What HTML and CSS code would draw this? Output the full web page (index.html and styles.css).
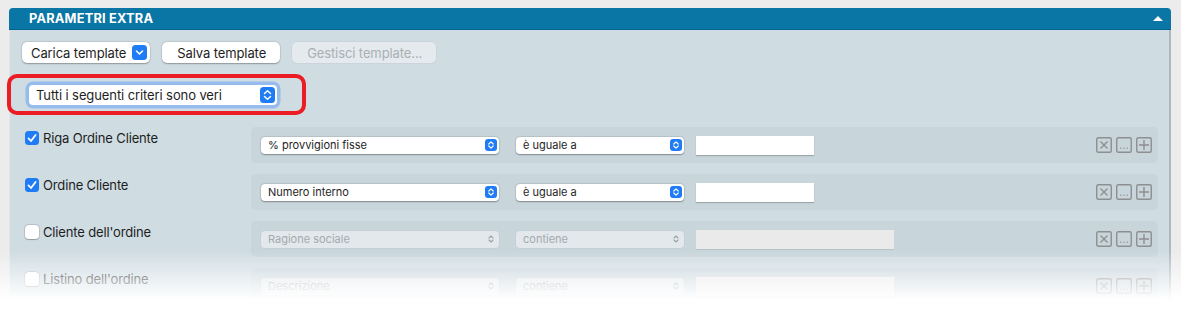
FILE: index.html
```html
<!DOCTYPE html>
<html lang="it">
<head>
  <meta charset="UTF-8">
  <meta name="viewport" content="width=device-width, initial-scale=1.0">
  <title>Parametri extra</title>
  <link rel="stylesheet" href="styles.css">
</head>
<body>

<div class="panel">
  <div class="panel-head">
    <span class="panel-title">PARAMETRI EXTRA</span>
    <span class="collapse"></span>
  </div>

  <div class="panel-body">
    <div class="toolbar">
      <button class="btn btn-popup">Carica template
        <svg class="chev" width="15" height="15" viewBox="0 0 15 15"><rect width="15" height="15" rx="3.5" fill="#1f7cf5"/><path d="M4.5 6 L7.5 9 L10.5 6" fill="none" stroke="#fff" stroke-width="1.6" stroke-linecap="round" stroke-linejoin="round"/></svg>
      </button>
      <button class="btn">Salva template</button>
      <button class="btn" disabled>Gestisci template...</button>
    </div>

    <div class="match">
      <div class="select select-lg focused">
        <span>Tutti i seguenti criteri sono veri</span>
        <svg width="15" height="16" viewBox="0 0 15 16"><rect width="15" height="16" rx="3.5" fill="#1f7cf5"/><path d="M4.5 6.5 L7.5 3.8 L10.5 6.5 M4.5 9.5 L7.5 12.2 L10.5 9.5" fill="none" stroke="#fff" stroke-width="1.5" stroke-linecap="round" stroke-linejoin="round"/></svg>
      </div>
    </div>

    <div class="criteria" id="criteria"></div>
  </div>
</div>

<div class="fade"></div>

<script>
  const rows = [
    {label: "Riga Ordine Cliente", on: true, field: "% provvigioni fisse", op: "è uguale a"},
    {label: "Ordine Cliente", on: true, field: "Numero interno", op: "è uguale a"},
    {label: "Cliente dell'ordine", on: false, field: "Ragione sociale", op: "contiene"},
    {label: "Listino dell'ordine", on: false, field: "Descrizione", op: "contiene"}
  ];

  const stepOn = `<svg width="12" height="12" viewBox="0 0 12 12"><rect width="12" height="12" rx="3" fill="#1f7cf5"/><path d="M3.8 5 L6 2.9 L8.2 5 M3.8 7 L6 9.1 L8.2 7" fill="none" stroke="#fff" stroke-width="1.2" stroke-linecap="round" stroke-linejoin="round"/></svg>`;
  const stepOff = `<svg width="12" height="12" viewBox="0 0 12 12"><path d="M4 5 L6 3 L8 5 M4 7 L6 9 L8 7" fill="none" stroke="#9aa0a4" stroke-width="1.1" stroke-linecap="round" stroke-linejoin="round"/></svg>`;
  const actions = `
    <div class="actions">
      <svg width="16" height="16" viewBox="0 0 16 16"><rect x="0.75" y="0.75" width="14.5" height="14.5" rx="1.5"/><path d="M4.5 4.5 L11.5 11.5 M11.5 4.5 L4.5 11.5"/></svg>
      <svg width="16" height="16" viewBox="0 0 16 16"><rect x="0.75" y="0.75" width="14.5" height="14.5" rx="1.5"/><path d="M4.3 11.2 h1 M7.5 11.2 h1 M10.7 11.2 h1"/></svg>
      <svg width="16" height="16" viewBox="0 0 16 16"><rect x="0.75" y="0.75" width="14.5" height="14.5" rx="1.5"/><path d="M8 3 V13 M3 8 H13"/></svg>
    </div>`;

  const list = document.getElementById("criteria");
  rows.forEach(r => {
    const row = document.createElement("div");
    row.className = "criterion" + (r.on ? "" : " off");
    row.innerHTML = `
      <label class="crit-label"><span class="check"></span>${r.label}</label>
      <div class="crit-box">
        <div class="select select-sm field"><span>${r.field}</span>${r.on ? stepOn : stepOff}</div>
        <div class="select select-sm op"><span>${r.op}</span>${r.on ? stepOn : stepOff}</div>
        <div class="input"></div>
        ${actions}
      </div>`;
    list.appendChild(row);
  });
</script>

</body>
</html>
```

FILE: styles.css
```css
body {
  margin: 0;
  background-color: #ececec;
  font-family: Inter, "Liberation Sans", sans-serif;
  color: #1e1e1e;
  overflow: hidden;
}

.panel {
  margin: 8px 0 0 9px;
  width: 1162px;
}

.panel-head {
  height: 21px;
  background-color: #0a76a5;
  border-bottom: 1px solid #06638c;
  border-radius: 4px 4px 0 0;
  display: flex;
  align-items: center;
  justify-content: space-between;
  padding: 0 8px 0 20px;
}

.panel-title {
  color: #fff;
  font-weight: 700;
  font-size: 12.8px;
  letter-spacing: 0.2px;
}

.collapse {
  width: 0;
  height: 0;
  border-left: 5px solid transparent;
  border-right: 5px solid transparent;
  border-bottom: 5px solid #fff;
}

.panel-body {
  background-color: #cfdce2;
  border-left: 1px solid #dfe7eb;
  box-shadow: inset -2px 0 0 #aeb9be;
  padding: 12px 13px 40px 12px;
}

/* boutons template */
.toolbar {
  display: flex;
  gap: 12px;
}

.btn {
  height: 21px;
  background: #fff;
  border: none;
  border-radius: 5px;
  box-shadow: 0 0.5px 1.5px rgba(0, 0, 0, 0.3), 0 0 0 0.5px rgba(0, 0, 0, 0.06);
  font-family: inherit;
  font-size: 13px;
  letter-spacing: -0.1px;
  color: #1e1e1e;
  padding: 0 14px 0 15px;
  display: flex;
  align-items: center;
}

.btn-popup {
  padding: 0 3px 0 9px;
  gap: 6px;
}

.btn:disabled {
  background: #e4eaed;
  color: #a9b0b4;
  box-shadow: 0 0 0 0.5px rgba(0, 0, 0, 0.06);
}

/* select generico */
.match {
  margin-top: 22px;
  padding-left: 7px;
}

.select {
  position: relative;
  display: flex;
  align-items: center;
  justify-content: space-between;
  background: #fff;
  border-radius: 4px;
  box-shadow: 0 0.5px 1.5px rgba(0, 0, 0, 0.35), 0 0 0 0.5px rgba(0, 0, 0, 0.05);
  box-sizing: border-box;
}

.select-lg {
  width: 248px;
  height: 20px;
  font-size: 13px;
  letter-spacing: -0.1px;
  padding: 0 2px 0 7px;
}

.select-lg.focused {
  box-shadow: 0 0 0 3.5px #96bcee;
}

/* cadre rouge d'annotation */
.select-lg.focused::after {
  content: "";
  position: absolute;
  left: -22px;
  right: -29px;
  top: -11px;
  bottom: -10px;
  border: 4px solid #ec1c24;
  border-radius: 10px;
}

.select-sm {
  height: 17px;
  font-size: 11px;
  padding: 0 2px 0 7px;
}

.field { width: 238px; }
.op { width: 168px; margin-left: 17px; }

/* criteri */
.criteria {
  margin-top: 22px;
  display: flex;
  flex-direction: column;
  gap: 11px;
}

.criterion {
  display: flex;
  align-items: flex-start;
}

.crit-label {
  width: 226px;
  padding: 3px 0 0 3px;
  display: flex;
  align-items: center;
  gap: 4px;
  font-size: 13px;
  letter-spacing: -0.15px;
  line-height: 16px;
}

.check {
  width: 14px;
  height: 14px;
  border-radius: 3.5px;
  background: #fff;
  box-shadow: 0 0 0 0.5px rgba(0, 0, 0, 0.2), 0 0.5px 1px rgba(0, 0, 0, 0.2);
  box-sizing: border-box;
}

.criterion:not(.off) .check {
  background: #1f7cf5 url("data:image/svg+xml;utf8,<svg xmlns='http://www.w3.org/2000/svg' width='14' height='14'><path d='M3.5 7.4 L6 10 L10.6 4' fill='none' stroke='white' stroke-width='1.8' stroke-linecap='round' stroke-linejoin='round'/></svg>") center no-repeat;
  box-shadow: none;
}

.crit-box {
  flex: 1;
  height: 36px;
  background-color: #c8d5db;
  border-radius: 5px;
  display: flex;
  align-items: center;
  padding: 0 6px 0 10px;
}

.input {
  width: 118px;
  height: 19px;
  margin-left: 12px;
  background: #fff;
  box-shadow: 0 1px 1px rgba(0, 0, 0, 0.22);
}

.off .select {
  background: #e2e8eb;
  color: #a4aaae;
  box-shadow: 0 0 0 0.5px rgba(0, 0, 0, 0.04);
}

.off .input {
  width: 198px;
  background: #eaeaea;
  box-shadow: 0 1px 0 rgba(0, 0, 0, 0.08);
}

.actions {
  margin-left: auto;
  display: flex;
  gap: 4px;
}

.actions svg {
  fill: none;
  stroke: #8d8f90;
  stroke-width: 1.4;
}

.fade {
  position: fixed;
  left: 0;
  right: 0;
  top: 250px;
  bottom: 0;
  background: linear-gradient(to bottom, rgba(255, 255, 255, 0) 0, #fff 50px);
  pointer-events: none;
}
```
